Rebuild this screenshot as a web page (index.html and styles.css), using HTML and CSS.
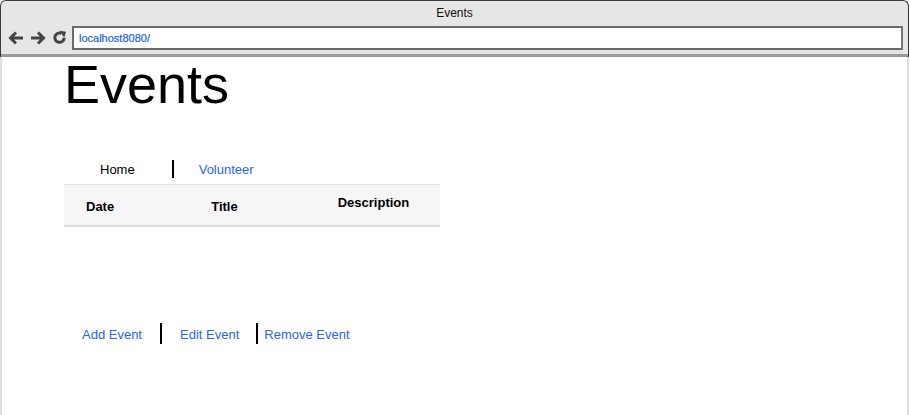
FILE: index.html
```html
<!DOCTYPE html>
<html>
<head>
<meta charset="utf-8">
<title>Events</title>
<link rel="stylesheet" href="styles.css">
</head>
<body>
<div class="window">
  <div class="chrome">
    <div class="tab-title">Events</div>
    <div class="toolbar">
      <svg class="nav-icon" width="16" height="16" viewBox="0 0 16 16"><path d="M15 8H3M8 2.5L2.5 8L8 13.5" fill="none" stroke="#444" stroke-width="3" stroke-linejoin="miter"/></svg>
      <svg class="nav-icon" width="16" height="16" viewBox="0 0 16 16"><path d="M1 8H13M8 2.5L13.5 8L8 13.5" fill="none" stroke="#444" stroke-width="3" stroke-linejoin="miter"/></svg>
      <svg class="nav-icon reload" width="15" height="15" viewBox="0 0 16 16"><path d="M13 8.5A5 5 0 1 1 10.2 3.6" fill="none" stroke="#444" stroke-width="3.2"/><path d="M8 0.8L15 1.8L13 8.2Z" fill="#444"/></svg>
      <div class="address">localhost8080/</div>
    </div>
  </div>
  <div class="page">
    <h1 class="heading">Events</h1>
    <nav class="tabs">
      <span class="tab tab-home">Home</span>
      <span class="sep sep-nav"></span>
      <a class="tab tab-vol link">Volunteer</a>
    </nav>
    <div class="table-head">
      <span class="col col-date">Date</span>
      <span class="col col-title">Title</span>
      <span class="col col-desc">Description</span>
    </div>
    <div class="actions">
      <a class="link act act-add">Add Event</a>
      <span class="sep sep-act"></span>
      <a class="link act act-edit">Edit Event</a>
      <span class="sep sep-act"></span>
      <a class="link act act-remove">Remove Event</a>
    </div>
  </div>
</div>
</body>
</html>
```
FILE: styles.css
```css
html, body {
  margin: 0;
  padding: 0;
  background: #fff;
  font-family: "Liberation Sans", Arial, sans-serif;
}
.window {
  width: 910px;
  height: 415px;
  box-sizing: border-box;
  display: flex;
  flex-direction: column;
}
.chrome {
  height: 57px;
  box-sizing: border-box;
  background: #e6e6e6;
  border: 1px solid #3a3a3a;
  border-bottom: none;
  border-radius: 6px 6px 0 0;
  margin-right: 1px;
  display: flex;
  flex-direction: column;
  box-shadow: inset 0 -3px 0 #9a9a9a;
}
.tab-title {
  height: 24px;
  line-height: 25px;
  text-align: center;
  font-size: 12px;
  color: #111;
}
.toolbar {
  display: flex;
  align-items: center;
  padding-left: 7px;
  height: 25px;
}
.nav-icon {
  display: block;
  margin-right: 6px;
}
.nav-icon.reload {
  margin-right: 5px;
}
.address {
  flex: 1;
  height: 24px;
  box-sizing: border-box;
  margin-right: 5px;
  background: #fff;
  border: 2px solid #6a6a6a;
  border-right-color: #777;
  font-size: 11px;
  line-height: 20px;
  padding-left: 5px;
  color: #1a5fe0;
  -webkit-text-stroke: 0.2px #1a5fe0;
}
.page {
  flex: 1;
  border-left: 2px solid #dedede;
  border-right: 2px solid #dedede;
  margin-right: 1px;
  padding-left: 62px;
}
.heading {
  margin: 0;
  font-weight: normal;
  font-size: 54px;
  line-height: 54px;
  color: #000;
}
.tabs {
  display: flex;
  align-items: center;
  margin-top: 47px;
  margin-bottom: 4px;
  height: 22px;
  font-size: 13px;
}
.tab-home {
  margin-left: 36px;
  color: #000;
}
.sep {
  display: inline-block;
  width: 2px;
  background: #000;
}
.sep-nav {
  height: 18px;
  margin-left: 37px;
}
.tab-vol {
  margin-left: 25px;
}
.link {
  color: #2566f5;
  text-decoration: none;
}
.table-head {
  width: 376px;
  height: 43px;
  box-sizing: border-box;
  background: #f6f6f6;
  border-top: 1px solid #e4e4e4;
  border-bottom: 2px solid #dedede;
  display: flex;
  font-size: 13px;
  font-weight: bold;
  color: #000;
}
.col {
  display: block;
}
.col-date {
  margin-left: 22px;
  margin-top: 14px;
}
.col-title {
  margin-left: 97px;
  margin-top: 14px;
}
.col-desc {
  margin-left: 100px;
  margin-top: 10px;
}
.actions {
  display: flex;
  align-items: center;
  margin-top: 96px;
  height: 21px;
  font-size: 13px;
}
.sep-act {
  height: 21px;
}
.act {
  padding-top: 2px;
}
.act-add {
  margin-left: 18px;
  margin-right: 18px;
}
.act-edit {
  margin-left: 18px;
  margin-right: 17px;
}
.act-remove {
  margin-left: 6px;
}
```
